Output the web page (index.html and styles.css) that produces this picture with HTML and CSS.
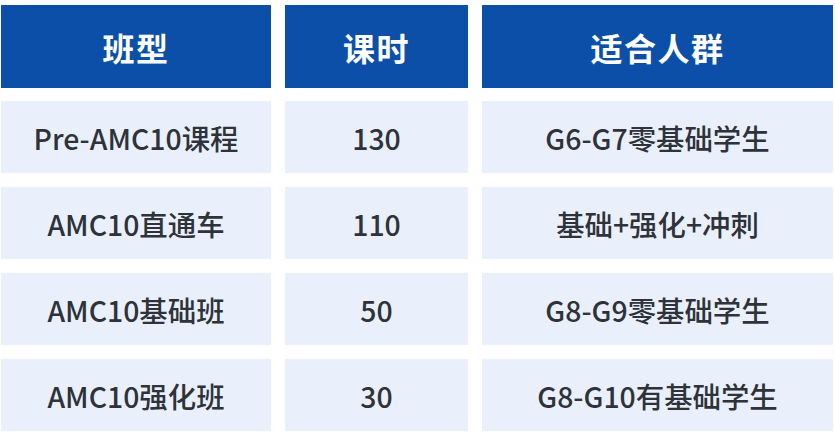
FILE: index.html
```html
<!DOCTYPE html>
<html lang="zh">
<head>
<meta charset="utf-8">
<title>AMC10 课程</title>
<link rel="stylesheet" href="styles.css">
</head>
<body>
<div class="table">
  <div class="cell head">班型</div>
  <div class="cell head">课时</div>
  <div class="cell head">适合人群</div>

  <div class="cell body">Pre-AMC10课程</div>
  <div class="cell body">130</div>
  <div class="cell body">G6-G7零基础学生</div>

  <div class="cell body">AMC10直通车</div>
  <div class="cell body">110</div>
  <div class="cell body">基础+强化+冲刺</div>

  <div class="cell body">AMC10基础班</div>
  <div class="cell body">50</div>
  <div class="cell body">G8-G9零基础学生</div>

  <div class="cell body">AMC10强化班</div>
  <div class="cell body">30</div>
  <div class="cell body">G8-G10有基础学生</div>
</div>
</body>
</html>
```
FILE: styles.css
```css
html, body {
  margin: 0;
  padding: 0;
  background: #ffffff;
}
body {
  width: 835px;
  height: 433px;
  overflow: hidden;
  font-family: "Noto Sans CJK SC", "Noto Sans", sans-serif;
}
.table {
  display: grid;
  grid-template-columns: 270px 183px 351px;
  grid-template-rows: 82px 72px 72px 72px 72px;
  column-gap: 14px;
  row-gap: 14px;
  padding: 5px 0 0 1px;
}
.table > .head:nth-child(-n+3) {
  margin-bottom: -1px;
}
.cell {
  display: flex;
  align-items: center;
  justify-content: center;
  white-space: nowrap;
}
.head {
  background: #0b4fa8;
  color: #ffffff;
  font-size: 32px;
  font-weight: 700;
  letter-spacing: 1.5px;
}
.body {
  background: #eaf0fb;
  color: #2e3339;
  font-size: 28.4px;
  font-weight: 500;
}
```
